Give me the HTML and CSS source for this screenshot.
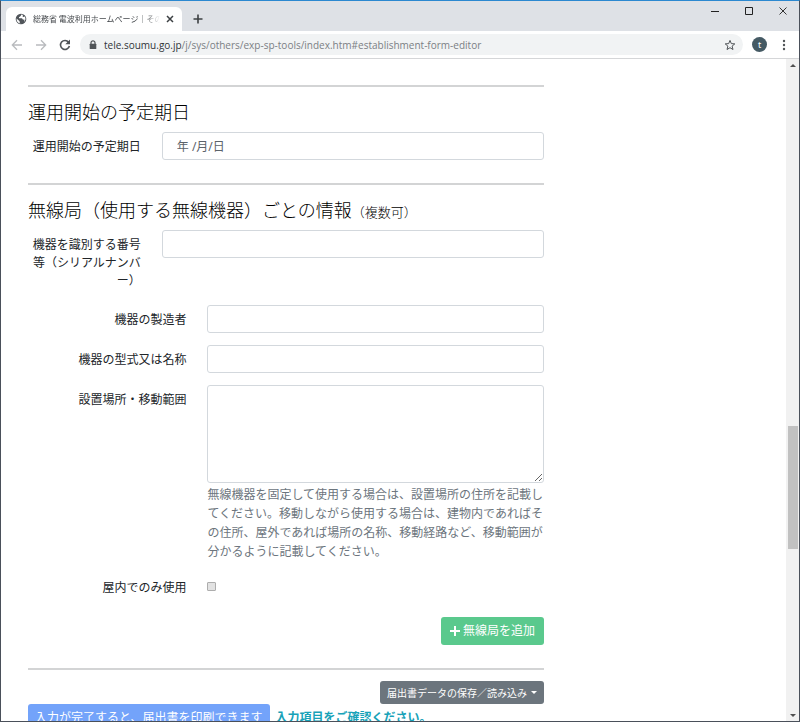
FILE: index.html
```
<!DOCTYPE html>
<html lang="ja">
<head>
    <meta charset="UTF-8">
    <meta name="viewport" content="width=device-width, initial-scale=1.0">
    <title>総務省 電波利用ホームページ</title>
    <link rel="stylesheet" href="styles.css">
</head>
<body>
    <header class="tab-strip">
        <div class="tab">
            <svg viewBox="0 0 12 12" width="12" height="12">
                <circle cx="6" cy="6" r="5.3" fill="#50555a"/>
                <path d="M1.6 5.6L4.6 8.3V9.4L5.5 10.6C3 10.5 1.3 8.4 1.6 5.6zM6.3 1.5L5.7 3L4 4.2V5.3H7L7.8 6.5L9.5 6.8L9 8.9C10.5 7.5 10.9 5.4 9.9 3.5L8.3 3.9L7.5 3.2L8 1.9z" fill="#fff"/>
            </svg>
            <span class="tab-title">総務省 電波利用ホームページ｜その</span>
            <button class="icon-button" aria-label="タブを閉じる">
                <svg viewBox="0 0 8 8" width="8" height="8"><path d="M1 1l6 6M7 1L1 7" stroke="#3c4043" stroke-width="1.5"/></svg>
            </button>
        </div>
        <button class="icon-button new-tab" aria-label="新しいタブ">
            <svg viewBox="0 0 10 10" width="10" height="10"><path d="M5 .5v9M.5 5h9" stroke="#3c4043" stroke-width="1.6"/></svg>
        </button>
        <div class="window-buttons">
            <button class="icon-button" aria-label="最小化">
                <svg viewBox="0 0 8 8" width="8" height="8"><path d="M0 4.5h8" stroke="#222"/></svg>
            </button>
            <button class="icon-button" aria-label="最大化">
                <svg viewBox="0 0 8 8" width="8" height="8"><path d="M.5.5h7v7h-7z" fill="none" stroke="#222"/></svg>
            </button>
            <button class="icon-button" aria-label="閉じる">
                <svg viewBox="0 0 8 8" width="8" height="8"><path d="M.5.5l7 7M7.5.5l-7 7" stroke="#333"/></svg>
            </button>
        </div>
    </header>

    <nav class="toolbar">
        <button class="icon-button" aria-label="戻る">
            <svg viewBox="0 0 12 12" width="12" height="12"><path d="M11 6H1.5M6 1.2L1.3 6L6 10.8" fill="none" stroke="#b9bbbe" stroke-width="1.3"/></svg>
        </button>
        <button class="icon-button" aria-label="進む">
            <svg viewBox="0 0 12 12" width="12" height="12"><path d="M1 6h9.5M6 1.2L10.7 6L6 10.8" fill="none" stroke="#b9bbbe" stroke-width="1.3"/></svg>
        </button>
        <button class="icon-button" aria-label="再読み込み">
            <svg viewBox="0 0 12 12" width="12" height="12"><path d="M9.6 3.2A4.5 4.5 0 1 0 10.4 7" fill="none" stroke="#505458" stroke-width="1.6"/><path d="M11 .6V5.3H6.3z" fill="#505458"/></svg>
        </button>
        <div class="address-bar">
            <svg viewBox="0 0 8 10" width="8" height="10"><path d="M2 4.5V2.8a2 2 0 0 1 4 0V4.5" fill="none" stroke="#505458" stroke-width="1.2"/><rect x=".7" y="3.7" width="6.6" height="5.3" rx=".6" fill="#505458"/></svg>
            <span class="url"><span class="host">tele.soumu.go.jp</span>/j/sys/others/exp-sp-tools/index.htm#establishment-form-editor</span>
            <button class="icon-button" aria-label="ブックマーク">
                <svg viewBox="0 0 12 12" width="12" height="12"><path d="M6 1.4L7.3 4.6L10.8 4.9L8.1 7.1L9 10.5L6 8.7L3 10.5L3.9 7.1L1.2 4.9L4.7 4.6z" fill="none" stroke="#505458"/></svg>
            </button>
        </div>
        <span class="avatar">t</span>
        <button class="icon-button" aria-label="メニュー">
            <svg viewBox="0 0 4 12" width="4" height="12" fill="#505458"><circle cx="2" cy="2" r="1.2"/><circle cx="2" cy="6" r="1.2"/><circle cx="2" cy="10" r="1.2"/></svg>
        </button>
    </nav>

    <div class="viewport">
        <main>
            <form>
                <section>
                    <h2>運用開始の予定期日</h2>
                    <div class="row">
                        <label for="start">運用開始の予定期日</label>
                        <input type="text" id="start" class="control" placeholder="年 /月/日">
                    </div>
                </section>

                <section>
                    <h2>無線局（使用する無線機器）ごとの情報<small>（複数可）</small></h2>
                    <div class="row">
                        <label for="serial">機器を識別する番号等（シリアルナンバー）</label>
                        <input type="text" id="serial" class="control">
                    </div>
                    <div class="details">
                        <div class="row sub">
                            <label for="maker">機器の製造者</label>
                            <input type="text" id="maker" class="control">
                        </div>
                        <div class="row sub">
                            <label for="model">機器の型式又は名称</label>
                            <input type="text" id="model" class="control">
                        </div>
                        <div class="row sub">
                            <label for="place">設置場所・移動範囲</label>
                            <div>
                                <textarea id="place" class="control"></textarea>
                                <p class="help">無線機器を固定して使用する場合は、設置場所の住所を記載してください。移動しながら使用する場合は、建物内であればその住所、屋外であれば場所の名称、移動経路など、移動範囲が分かるように記載してください。</p>
                            </div>
                        </div>
                        <div class="row sub">
                            <label for="indoor">屋内でのみ使用</label>
                            <input type="checkbox" id="indoor">
                        </div>
                    </div>
                    <div class="actions">
                        <button type="button" class="btn btn-add">
                            <svg viewBox="0 0 12 12" width="12" height="12"><path d="M6 1v10M1 6h10" stroke="#fff" stroke-width="2"/></svg>
                            無線局を追加
                        </button>
                    </div>
                </section>

                <section class="finish">
                    <div class="actions">
                        <button type="button" class="btn btn-data">届出書データの保存／読み込み<span class="caret"></span></button>
                    </div>
                    <div class="print">
                        <button type="button" class="btn btn-print">入力が完了すると、届出書を印刷できます</button>
                        <strong>入力項目をご確認ください。</strong>
                    </div>
                </section>
            </form>
        </main>
        <div class="scrollbar">
            <span class="arrow up"></span>
            <div class="thumb"></div>
            <span class="arrow down"></span>
        </div>
    </div>
</body>
</html>
```
FILE: styles.css
```
* {
    box-sizing: border-box;
}

body {
    margin: 0;
    height: 100vh;
    display: flex;
    flex-direction: column;
    overflow: hidden;
    border: 1px solid #4a505a;
    border-top-color: #2b88d0;
    background: #fff;
    color: #212529;
    font-family: "Noto Sans", "Noto Sans CJK JP", sans-serif;
    font-size: 12px;
    line-height: 18px;
}

button, input, textarea {
    font: inherit;
    color: inherit;
}

svg {
    display: block;
    flex: none;
}

.icon-button {
    display: flex;
    padding: 0;
    border: none;
    background: none;
}

/* browser window */
.tab-strip {
    display: flex;
    flex: none;
    height: 30px;
    padding-left: 5px;
    background: #dee1e6;
}

.tab {
    display: flex;
    align-items: center;
    gap: 6px;
    width: 176px;
    margin-top: 6px;
    padding: 0 8px 0 9px;
    border-radius: 6px 6px 0 0;
    background: #fff;
}

.tab-title {
    flex: 1;
    overflow: hidden;
    white-space: nowrap;
    color: #45494d;
    font-family: "Noto Sans CJK JP", sans-serif;
    font-size: 8px;
    -webkit-mask-image: linear-gradient(to right, #000 88%, transparent);
    mask-image: linear-gradient(to right, #000 88%, transparent);
}

.new-tab {
    align-self: center;
    margin: 6px 0 0 11px;
}

.window-buttons {
    display: flex;
    gap: 26px;
    margin-left: auto;
    padding: 6px 12px 0 0;
    align-items: flex-start;
}

.toolbar {
    display: flex;
    flex: none;
    align-items: center;
    gap: 12px;
    height: 28px;
    padding: 0 13px 0 10px;
    border-bottom: 1px solid #d5d6d8;
}

.address-bar {
    display: flex;
    flex: 1;
    align-items: center;
    gap: 7px;
    min-width: 0;
    height: 21px;
    margin-left: -3px;
    padding: 0 7px 0 9px;
    border-radius: 11px;
    background: #f1f3f4;
}

.url {
    flex: 1;
    overflow: hidden;
    white-space: nowrap;
    color: #7b8084;
    font-family: "Open Sans", sans-serif;
    font-size: 10px;
}

.host {
    color: #303438;
}

.avatar {
    width: 15px;
    margin: 0 3px 0 -3px;
    border-radius: 50%;
    background: #455a64;
    color: #fff;
    font-size: 9px;
    line-height: 15px;
    text-align: center;
}

/* page */
.viewport {
    display: flex;
    flex: 1;
    min-height: 0;
}

main {
    display: grid;
    flex: 1;
    grid-template-columns: minmax(0, 12fr) minmax(0, 5fr);
    padding: 26px 27px 0;
    overflow: hidden;
}

section {
    padding-top: 14px;
    border-top: 2px solid #d3d4d5;
    margin-bottom: 23px;
}

h2 {
    margin: 0 0 9px;
    color: #000;
    font-size: 18px;
    font-weight: 300;
    line-height: 22px;
    white-space: nowrap;
}

h2 small {
    font-size: 13px;
    line-height: 1;
}

.row {
    display: grid;
    grid-template-columns: 7fr 20fr;
    align-items: start;
}

.sub {
    grid-template-columns: 8fr 15fr;
}

.row label {
    padding: 6px 21px 0 0;
    line-break: loose;
    text-align: right;
}

.control {
    display: block;
    width: 100%;
    height: 28px;
    padding: 4px 14px;
    border: 1px solid #d3d8dd;
    border-radius: 3px;
    background: #fff;
}

.control::placeholder {
    color: #5c636a;
}

textarea.control {
    height: 98px;
    resize: vertical;
}

.details {
    display: grid;
    gap: 12px;
    margin-top: 15px;
}

.help {
    margin: 2px 0 0;
    color: #6c757d;
    line-height: 19px;
}

.row input[type="checkbox"] {
    width: 9px;
    height: 9px;
    margin: 9px 0 0;
    appearance: none;
    border: 1px solid #adadad;
    border-radius: 1px;
    background: #e2e2e2;
}

.actions {
    display: flex;
    justify-content: flex-end;
}

.details + .actions {
    margin-top: 20px;
}

.btn {
    display: flex;
    align-items: center;
    justify-content: center;
    border: none;
    border-radius: 3px;
    color: #fff;
    white-space: nowrap;
}

.btn-add {
    gap: 2px;
    height: 28px;
    padding: 0 9px 0 8px;
    background: #5ac98d;
}

.finish {
    padding-top: 11px;
}

.btn-data {
    gap: 4px;
    height: 23px;
    padding: 0 7px;
    background: #6c757d;
    font-size: 10px;
}

.caret {
    border: 3px solid transparent;
    border-top-color: #fff;
    border-bottom: none;
}

.print {
    display: flex;
    align-items: center;
    gap: 6px;
}

.btn-print {
    height: 28px;
    padding: 0 7px;
    background: #73a3fa;
}

.print strong {
    color: #17a2b8;
}

.scrollbar {
    display: grid;
    grid-template-rows: 12px 354fr 123fr 160fr 12px;
    width: 13px;
    padding: 0 1px 0 2px;
    background: #f1f1f1;
}

.thumb {
    grid-row: 3;
    background: #c1c1c1;
}

.arrow {
    place-self: center;
    border: 3px solid transparent;
}

.up {
    border-top: none;
    border-bottom-color: #505050;
}

.down {
    grid-row: 5;
    border-bottom: none;
    border-top-color: #505050;
}
```
